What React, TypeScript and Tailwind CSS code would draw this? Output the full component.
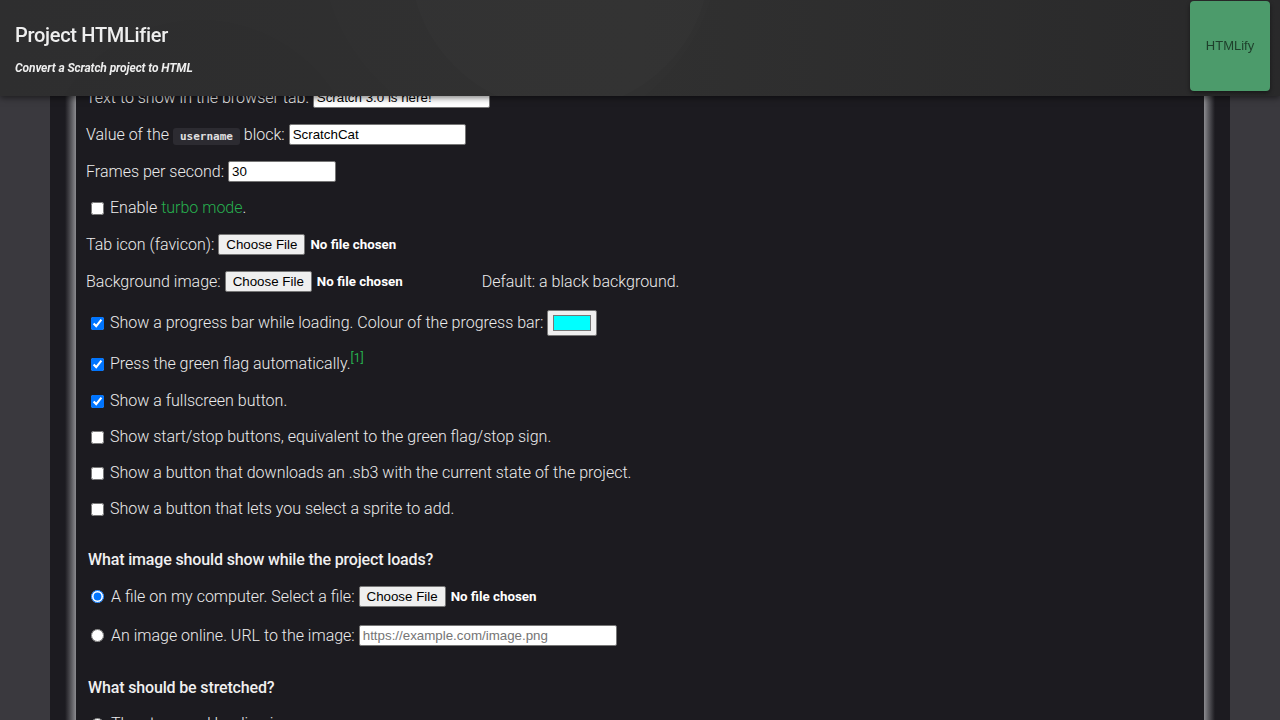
import React from "react"

const Check = ({ on = false }: { on?: boolean }) => (
    <input type="checkbox" defaultChecked={on} className="ml-[5px] mr-[6px] w-[13px] h-[13px] shrink-0" />
)

const Radio = ({ on = false, name = "loading" }: { on?: boolean; name?: string }) => (
    <input type="radio" name={name} defaultChecked={on} className="ml-[5px] mr-[7px] w-[13px] h-[13px] shrink-0" />
)

const TextBox = ({ value, placeholder, w }: { value?: string; placeholder?: string; w: string }) => (
    <input
        type="text"
        defaultValue={value}
        placeholder={placeholder}
        className={`${w} h-[21px] bg-white text-black border border-[#767676] rounded-[2px] px-[3px] text-[13.33px] font-['Liberation_Sans',Arial,sans-serif] placeholder:text-[#757575] outline-none`}
    />
)

const FilePicker = () => (
    <span className="inline-flex items-center w-[253px] shrink-0 text-[13.33px]">
        <span className="h-[21px] px-[7px] flex items-center bg-[#efefef] text-black border border-[#767676] rounded-[2px] font-['Liberation_Sans',Arial,sans-serif]">Choose File</span>
        <span className="ml-[5px] font-bold text-white font-['Roboto',sans-serif]">No file chosen</span>
    </span>
)

const App = () => {
    return (
        <div className="min-h-[720px] bg-[#3a393e] font-['Roboto',sans-serif] font-light text-[16px] text-[#ececec]">
            <header className="fixed top-0 left-0 right-0 h-[96px] z-10 flex justify-between overflow-hidden bg-gradient-to-r from-[#2e2e2f] via-[#303030] to-[#29292a] shadow-[0_2px_6px_rgba(0,0,0,0.5)]">
                <svg className="absolute inset-0 pointer-events-none" width="1280" height="96">
                    <circle cx="560" cy="-40" r="150" fill="#ffffff" opacity="0.01" />
                    <circle cx="520" cy="-60" r="200" fill="#ffffff" opacity="0.008" />
                    <circle cx="200" cy="180" r="160" fill="#000000" opacity="0.02" />
                </svg>
                <div className="relative pl-[15px] pt-[23px]">
                    <div className="text-[20px] leading-[24px] font-medium text-[#eeeeee] tracking-[-0.3px]">Project HTMLifier</div>
                    <div className="mt-[14px] text-[12px] leading-[14px] italic font-bold text-[#eeeeee] tracking-[-0.1px]">Convert a Scratch project to HTML</div>
                </div>
                <button className="relative mt-[1px] mr-[10px] w-[80px] h-[90px] rounded-[4px] bg-[#4c9b6b] text-[#1e3f2b] text-[13px] font-['Liberation_Sans',Arial,sans-serif] shadow-[0_2px_4px_rgba(0,0,0,0.45)]">
                    HTMLify
                </button>
            </header>

            <main className="mx-[50px] px-[15px] bg-[#1c1b20] min-h-[720px] flex">
                <div className="w-[11px] shrink-0 bg-gradient-to-r from-[#1c1b20] to-[#8c8c90]" />
                <div className="flex-1 pl-[10px] pt-[71px] pb-[20px] flex flex-col">
                    <div className="flex items-center gap-[4px] h-[21px] mt-[16px]">
                        <span>Text to show in the browser tab:</span>
                        <TextBox value="Scratch 3.0 is here!" w="w-[177px]" />
                    </div>
                    <div className="flex items-center gap-[4px] h-[21px] mt-[16px]">
                        <span>
                            Value of the{" "}
                            <code className="px-[7px] py-[2px] rounded-[3px] bg-[#2c2b31] text-[#e0e0e0] text-[11px] font-bold font-['DejaVu_Sans_Mono',monospace]">username</code>{" "}
                            block:
                        </span>
                        <TextBox value="ScratchCat" w="w-[177px]" />
                    </div>
                    <div className="flex items-center gap-[4px] h-[21px] mt-[16px]">
                        <span>Frames per second:</span>
                        <TextBox value="30" w="w-[108px]" />
                    </div>
                    <div className="flex items-center h-[20px] mt-[16px]">
                        <Check />
                        <span>
                            Enable <span className="text-[#27b04f]">turbo mode</span>.
                        </span>
                    </div>
                    <div className="flex items-center gap-[4px] h-[21px] mt-[16px]">
                        <span>Tab icon (favicon):</span>
                        <FilePicker />
                    </div>
                    <div className="flex items-center gap-[4px] h-[21px] mt-[16px]">
                        <span>Background image:</span>
                        <FilePicker />
                        <span>Default: a black background.</span>
                    </div>
                    <div className="flex items-center h-[26px] mt-[18px]">
                        <Check on />
                        <span className="mr-[4px]">Show a progress bar while loading. Colour of the progress bar:</span>
                        <span className="w-[50px] h-[26px] bg-[#efefef] border border-[#767676] rounded-[2px] px-[5px] py-[4px] flex">
                            <span className="flex-1 bg-[#00ffff] border border-[#777777]" />
                        </span>
                    </div>
                    <div className="flex items-center h-[26px] mt-[15px]">
                        <Check on />
                        <span>
                            Press the green flag automatically.
                            <sup className="text-[12px] font-normal text-[#27b04f] relative -top-[7px]">[1]</sup>
                        </span>
                    </div>
                    <div className="flex items-center h-[20px] mt-[14px]">
                        <Check on />
                        <span>Show a fullscreen button.</span>
                    </div>
                    <div className="flex items-center h-[20px] mt-[16px]">
                        <Check />
                        <span>Show start/stop buttons, equivalent to the green flag/stop sign.</span>
                    </div>
                    <div className="flex items-center h-[20px] mt-[16px]">
                        <Check />
                        <span>Show a button that downloads an .sb3 with the current state of the project.</span>
                    </div>
                    <div className="flex items-center h-[20px] mt-[16px]">
                        <Check />
                        <span>Show a button that lets you select a sprite to add.</span>
                    </div>

                    <h2 className="h-[20px] mt-[31px] pl-[2px] font-medium text-[16px] tracking-[-0.15px] text-[#f0f0f0] flex items-center">What image should show while the project loads?</h2>
                    <div className="flex items-center h-[21px] mt-[16px]">
                        <Radio on />
                        <span className="mr-[4px]">A file on my computer. Select a file:</span>
                        <FilePicker />
                    </div>
                    <div className="flex items-center h-[21px] mt-[18px]">
                        <Radio />
                        <span className="mr-[4px]">An image online. URL to the image:</span>
                        <TextBox placeholder="https://example.com/image.png" w="w-[258px]" />
                    </div>

                    <h2 className="h-[20px] mt-[32px] pl-[2px] font-medium text-[16px] tracking-[-0.15px] text-[#f0f0f0] flex items-center">What should be stretched?</h2>
                    <div className="flex items-center h-[20px] mt-[16px]">
                        <Radio name="stretch" />
                        <span>The stage and loading image.</span>
                    </div>
                </div>
                <div className="w-[11px] shrink-0 bg-gradient-to-r from-[#8c8c90] to-[#1c1b20]" />
            </main>
        </div>
    )
}

export default App
